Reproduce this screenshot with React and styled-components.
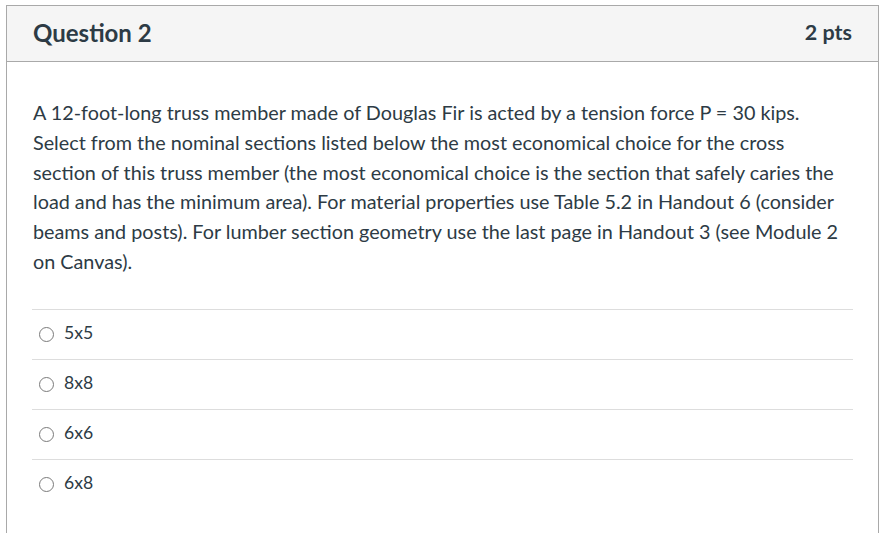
import React from "react";
import styled, { createGlobalStyle } from "styled-components";

const GlobalStyle = createGlobalStyle`
  body {
    margin: 0;
    background: #ffffff;
    font-family: Lato, "Helvetica Neue", Arial, sans-serif;
    color: #2d3b45;
  }
`;

const answers = ["5x5", "8x8", "6x6", "6x8"];

const App = () => {
  return (
    <>
      <GlobalStyle />
      <QuestionCard>
        <QuestionHeader>
          <h2>Question 2</h2>
          <Points>2 pts</Points>
        </QuestionHeader>
        <QuestionBody>
          <QuestionText>
            A 12-foot-long truss member made of Douglas Fir is acted by a tension
            force P = 30 kips. Select from the nominal sections listed below the
            most economical choice for the cross section of this truss member (the
            most economical choice is the section that safely caries the load and
            has the minimum area). For material properties use Table 5.2 in
            Handout 6 (consider beams and posts). For lumber section geometry use
            the last page in Handout 3 (see Module 2 on Canvas).
          </QuestionText>
          <AnswerList>
            {answers.map((answer) => (
              <AnswerRow key={answer}>
                <RadioCircle />
                <AnswerLabel>{answer}</AnswerLabel>
              </AnswerRow>
            ))}
          </AnswerList>
        </QuestionBody>
      </QuestionCard>
    </>
  );
};

export default App;

const QuestionCard = styled.div`
  margin: 5px 0 0 6px;
  width: 873px;
  height: 540px;
  border: 1px solid #a9a9a9;
  border-bottom: none;
  box-sizing: border-box;
  background: #ffffff;
`;

const QuestionHeader = styled.div`
  display: flex;
  align-items: center;
  justify-content: space-between;
  height: 56px;
  box-sizing: border-box;
  padding: 0 26px 3px 26px;
  background: #f5f5f5;
  border-bottom: 1px solid #a9a9a9;

  > h2 {
    margin: 0;
    font-size: 24px;
    font-weight: 700;
    color: #2d3b45;
  }
`;

const Points = styled.span`
  font-size: 21.5px;
  font-weight: 700;
  color: #2d3b45;
`;

const QuestionBody = styled.div`
  padding: 36px 25px 0 25px;
`;

const QuestionText = styled.p`
  margin: 0 7px 0 1px;
  font-size: 19.8px;
  line-height: 29.8px;
  color: #2d3b45;
`;

const AnswerList = styled.div`
  margin-top: 32px;
`;

const AnswerRow = styled.div`
  display: flex;
  align-items: center;
  height: 49px;
  padding-left: 7px;
  border-top: 1px solid #dddddd;
`;

const RadioCircle = styled.span`
  width: 13px;
  height: 13px;
  border: 1px solid #7a7a7a;
  border-radius: 50%;
  margin-right: 10px;
`;

const AnswerLabel = styled.span`
  font-size: 17.6px;
  padding-bottom: 4px;
  color: #2d3b45;
`;
